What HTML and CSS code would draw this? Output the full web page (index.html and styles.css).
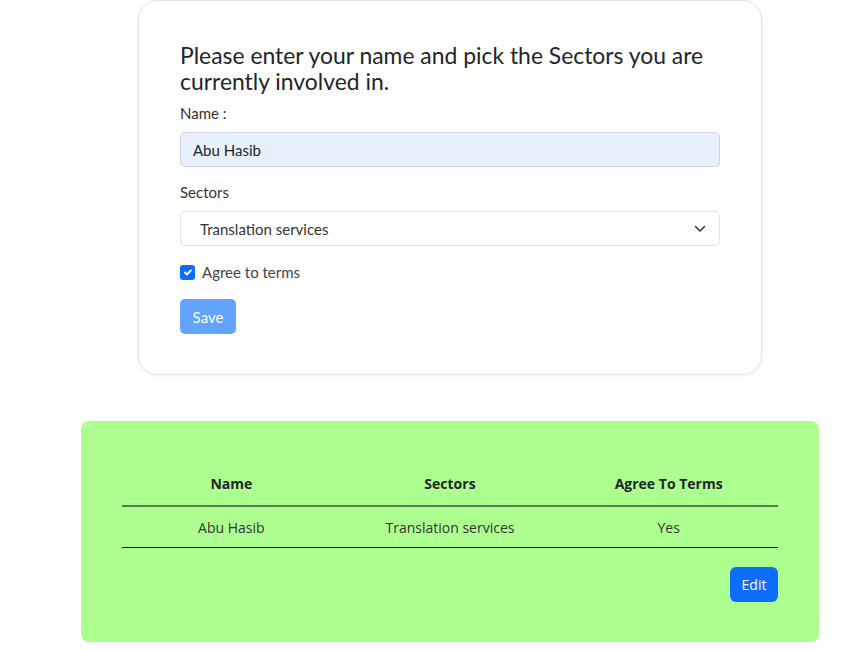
FILE: index.html
```html
<!DOCTYPE html>
<html>
<head>
<meta charset="utf-8">
<link rel="stylesheet" href="styles.css">
</head>
<body>
<div class="page">
  <div class="card">
    <h2 class="title">Please enter your name and pick the Sectors you are currently involved in.</h2>
    <div class="label label-name">Name :</div>
    <div class="input">Abu Hasib</div>
    <div class="label label-sectors">Sectors</div>
    <div class="select">
      <span class="select-text">Translation services</span>
      <svg class="chev" width="12" height="8" viewBox="0 0 12 8"><path d="M1.5 1.5l4.5 4.5 4.5-4.5" fill="none" stroke="#343a40" stroke-width="1.6" stroke-linecap="round" stroke-linejoin="round"/></svg>
    </div>
    <div class="check-row">
      <span class="checkbox"><svg width="14" height="14" viewBox="0 0 20 20"><path d="M6 10l3 3 6-6" fill="none" stroke="#fff" stroke-width="3" stroke-linecap="round" stroke-linejoin="round"/></svg></span>
      <span class="check-label">Agree to terms</span>
    </div>
    <div class="btn-save">Save</div>
  </div>

  <div class="result">
    <table class="tbl">
      <thead>
        <tr><th>Name</th><th>Sectors</th><th>Agree To Terms</th></tr>
      </thead>
      <tbody>
        <tr><td>Abu Hasib</td><td>Translation services</td><td>Yes</td></tr>
      </tbody>
    </table>
    <div class="actions"><span class="btn-edit">Edit</span></div>
  </div>
</div>
</body>
</html>
```

FILE: styles.css
```css
html, body {
  margin: 0;
  padding: 0;
  background: #fff;
}
.page {
  display: flex;
  flex-direction: column;
  align-items: flex-start;
}
.card {
  box-sizing: border-box;
  width: 624px;
  margin-left: 138px;
  margin-top: 0;
  border: 1px solid #e2e2e2;
  border-radius: 20px;
  box-shadow: 0 1px 4px rgba(0,0,0,0.07);
  padding: 41px 41px 41px 41px;
  font-family: Lato, "Noto Sans", sans-serif;
  color: #212529;
  height: 375px;
}
.title {
  margin: 0;
  font-weight: 400;
  font-size: 22.9px;
  line-height: 26px;
  width: 540px;
}
.label {
  font-size: 15px;
  line-height: 20px;
  color: #333;
}
.label-name { margin-top: 9px; margin-bottom: 9px; }
.label-sectors { margin-top: 15px; margin-bottom: 9px; }
.input {
  box-sizing: border-box;
  width: 540px;
  height: 35px;
  border: 1px solid #ccd6e3;
  background: #e8f0fe;
  border-radius: 5px;
  padding: 0 12px;
  display: flex;
  align-items: center;
  font-size: 15px;
  color: #212529;
}
.select {
  box-sizing: border-box;
  width: 540px;
  height: 35px;
  border: 1px solid #dee2e6;
  border-radius: 5px;
  padding: 0 13px 0 19px;
  display: flex;
  align-items: center;
  justify-content: space-between;
  font-size: 15px;
  color: #333;
}
.check-row {
  display: flex;
  align-items: center;
  margin-top: 17px;
  gap: 7px;
  font-size: 15px;
  color: #444;
}
.checkbox {
  width: 15px;
  height: 15px;
  border-radius: 3px;
  background: #0d6efd;
  display: flex;
  align-items: center;
  justify-content: center;
}
.checkbox svg { width: 13px; height: 13px; }
.btn-save {
  margin-top: 18px;
  width: 56px;
  height: 35px;
  border-radius: 5px;
  background: #62a4ff;
  color: #fff;
  font-size: 15px;
  display: flex;
  align-items: center;
  justify-content: center;
}
.result {
  box-sizing: border-box;
  width: 738px;
  margin-left: 81px;
  margin-top: 46px;
  background: #adff90;
  border-radius: 8px;
  padding: 41px 41px 40px 41px;
  font-family: "Open Sans", "Noto Sans", sans-serif;
  color: #212529;
}
.tbl {
  width: 100%;
  border-collapse: collapse;
  table-layout: fixed;
  font-size: 14px;
}
.tbl th {
  font-weight: 700;
  height: 43px;
  text-align: center;
  border-bottom: 2px solid #5c7a52;
  padding: 0;
}
.tbl td {
  text-align: center;
  height: 40px;
  padding: 0;
  border-bottom: 1px solid #000;
  color: #333;
}
.actions {
  display: flex;
  justify-content: flex-end;
  margin-top: 19px;
}
.btn-edit {
  width: 48px;
  height: 35px;
  border-radius: 6px;
  background: #0d6efd;
  color: #fff;
  font-size: 14px;
  display: flex;
  align-items: center;
  justify-content: center;
}
```
